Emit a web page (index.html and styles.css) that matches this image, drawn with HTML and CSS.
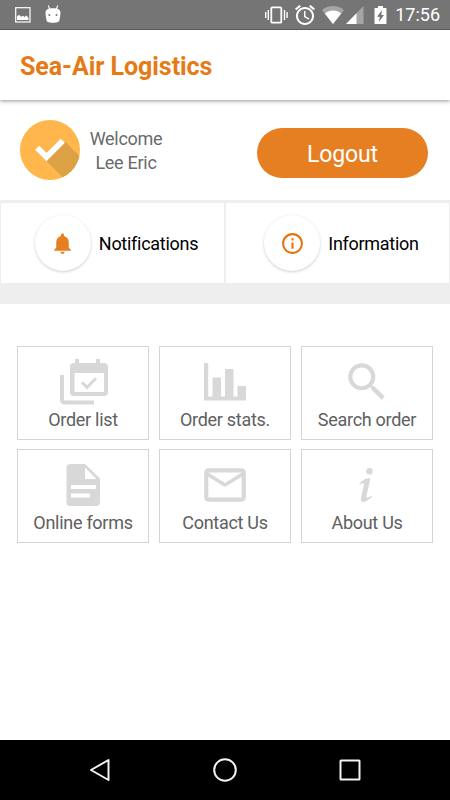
FILE: index.html
```
<!DOCTYPE html>
<html lang="en">

<head>
  <meta charset="UTF-8">
  <meta name="viewport" content="width=device-width, initial-scale=1.0">
  <title>Sea-Air Logistics</title>
  <link rel="stylesheet" href="styles.css">
</head>

<body>
  <div class="status-bar">
    <div class="status-left">
      <svg width="16" height="16" viewBox="0 0 16 16">
        <rect x="0.7" y="0.7" width="14.3" height="14.3" fill="none" stroke="#fff" stroke-width="1.2" />
        <path d="M2 13V9.500l2-1.800 2 2 2-1 1.500 1.300 2-1.500L13.500 11v2z" fill="#fff" />
      </svg>
      <svg width="16" height="18" viewBox="0 0 16 18">
        <path d="M3.300.5l1.500 4M12.700.5l-1.500 4" stroke="#fff" stroke-width="1.1" />
        <path d="M.5 8c0-3.500 2.500-4.700 7.500-4.700s7.500 1.200 7.500 4.700c0 2-.7 4.500-.9 6.500-.2 2.200-1.600 3.200-6.600 3.200s-6.400-1-6.600-3.200C1.200 12.500.5 10 .5 8z" fill="#fff" />
        <circle cx="4.300" cy="10" r="1" fill="#757575" />
        <circle cx="11.500" cy="10" r="1" fill="#757575" />
      </svg>
    </div>
    <div class="status-right">
      <svg class="icon-vibrate" width="24" height="18" viewBox="0 0 24 18" fill="none" stroke="#fff">
        <rect x="7.300" y="1.300" width="10" height="15.400" rx="1" stroke-width="1.800" />
        <path d="M4.300 4v10M20.500 4v10M1.700 6v6M23.100 6v6" stroke-width="1.400" />
      </svg>
      <svg class="icon-alarm" width="20" height="20" viewBox="2 2 20 20" fill="#fff">
        <path d="M22 5.720l-4.600-3.860-1.290 1.530 4.600 3.860L22 5.720zM7.880 3.390L6.600 1.860 2 5.710l1.290 1.530 4.590-3.850zM12.500 8H11v6l4.750 2.850.75-1.230-4-2.370V8zM12 4c-4.970 0-9 4.030-9 9s4.020 9 9 9c4.970 0 9-4.030 9-9s-4.030-9-9-9zm0 16c-3.870 0-7-3.130-7-7s3.130-7 7-7 7 3.130 7 7-3.130 7-7 7z" />
      </svg>
      <svg class="icon-wifi" width="22" height="18" viewBox="0 0 22 18" fill="#fff">
        <path d="M11 18L0 4.200C6-1.300 16-1.300 22 4.200z" fill-opacity=".35" />
        <path d="M11 18L2.800 7.600C7.500 3.400 14.500 3.400 19.200 7.600z" />
      </svg>
      <svg class="icon-signal" width="18" height="18" viewBox="0 0 18 18" fill="#fff">
        <path d="M0 18L17.500 0V18z" fill-opacity=".35" />
        <path d="M0 18L10.500 7.200V18z" />
      </svg>
      <svg class="icon-battery" width="13" height="18" viewBox="0 0 13 18">
        <path d="M4 0h5v2h2.700q.8 0 .8.8V17.200q0 .8-.8.800H1.300q-.8 0-.8-.8V2.800q0-.8.800-.8H4z" fill="#fff" />
        <path d="M8 4.300L3 10.700h2.800L5 15.700l5-6.700H7.300z" fill="#757575" />
      </svg>
      <span class="time">17:56</span>
    </div>
  </div>

  <header class="header">
    <h1>Sea-Air Logistics</h1>
  </header>

  <section class="user">
    <svg class="avatar" width="60" height="60" viewBox="0 0 60 60">
      <defs>
        <clipPath id="avatar-clip"><circle cx="30" cy="30" r="30" /></clipPath>
      </defs>
      <circle cx="30" cy="30" r="30" fill="#ffb74d" />
      <path d="M26.500 41L47 61.500H60V36.500L44.800 21.300z" fill="#dca045" clip-path="url(#avatar-clip)" />
      <path d="M17.200 27.800L26.500 37.100L42.800 20.800" fill="none" stroke="#fff" stroke-width="5.800" />
    </svg>
    <div class="welcome">
      <div>Welcome</div>
      <div>Lee Eric</div>
    </div>
    <button class="logout">Logout</button>
  </section>

  <section class="shortcuts">
    <div class="shortcut">
      <span class="round">
        <svg width="25" height="25" viewBox="0 0 24 24" fill="#e67e22">
          <path d="M12 22c1.100 0 2-.9 2-2h-4c0 1.100.89 2 2 2zm6-6v-5c0-3.070-1.640-5.640-4.500-6.320V4c0-.83-.67-1.500-1.500-1.500s-1.500.67-1.500 1.500v.68C7.630 5.360 6 7.920 6 11v5l-2 2v1h16v-1l-2-2z" />
        </svg>
      </span>
      <span>Notifications</span>
    </div>
    <div class="shortcut">
      <span class="round">
        <svg width="25" height="25" viewBox="0 0 24 24" fill="#e67310">
          <path d="M11 17h2v-6h-2v6zm1-15C6.480 2 2 6.480 2 12s4.480 10 10 10 10-4.480 10-10S17.520 2 12 2zm0 18c-4.410 0-8-3.590-8-8s3.590-8 8-8 8 3.590 8 8-3.590 8-8 8zM11 9h2V7h-2v2z" />
        </svg>
      </span>
      <span>Information</span>
    </div>
  </section>

  <main class="menu">
    <div class="menu-item">
      <svg viewBox="0 0 50 50">
        <path d="M4 18v24.500q0 3 3 3h29" fill="none" stroke="#d8d8d8" stroke-width="4" />
        <path d="M17 2h4v4h17V2h4v4h4q4 0 4 4v25q0 4-4 4H16q-4 0-4-4V10q0-4 4-4h1zM16.500 16v19H46V16z" fill-rule="evenodd" />
        <path d="M24 25.500l5 4.800 9-9" fill="none" stroke="#d8d8d8" stroke-width="3" />
      </svg>
      <div>Order list</div>
    </div>
    <div class="menu-item">
      <svg viewBox="0 0 50 50">
        <path d="M4 6h4.200v33.500H12.500V20.500h8.500v19H25V12h8.500v27.500H37.500V29H46v14.500H4z" />
      </svg>
      <div>Order stats.</div>
    </div>
    <div class="menu-item">
      <svg viewBox="0 0 24 24">
        <path d="M15.500 14h-.79l-.28-.27C15.410 12.590 16 11.110 16 9.500 16 5.910 13.090 3 9.500 3S3 5.910 3 9.500 5.910 16 9.500 16c1.610 0 3.090-.59 4.230-1.570l.27.28v.79l5 4.990L20.490 19l-4.990-5zm-6 0C7.010 14 5 11.990 5 9.500S7.010 5 9.500 5 14 7.010 14 9.500 11.990 14 9.500 14z" />
      </svg>
      <div>Search order</div>
    </div>
    <div class="menu-item">
      <svg viewBox="0 0 50 50">
        <path d="M12.500 4H27L42 18.500V42q0 4-4 4H12.500q-4 0-4-4V8q0-4 4-4zM27 7.500V19H38.500zM13 25v4h25v-4zM13 33.500v4h18.800v-4z" fill-rule="evenodd" />
      </svg>
      <div>Online forms</div>
    </div>
    <div class="menu-item">
      <svg viewBox="0 0 24 24">
        <path d="M20 4H4c-1.100 0-2 .9-2 2v12c0 1.100.9 2 2 2h16c1.100 0 2-.9 2-2V6c0-1.100-.9-2-2-2zm0 14H4V8l8 5 8-5v10zm-8-7L4 6h16l-8 5z" />
      </svg>
      <div>Contact Us</div>
    </div>
    <div class="menu-item">
      <svg viewBox="0 0 50 50">
        <circle cx="27.500" cy="11.300" r="3.200" />
        <path d="M17.500 23.500Q22 18 28.500 18.200L24.400 36Q23.700 39.500 29.800 35.400V37.200Q24.500 42 21 42Q18.300 41.800 19.100 37.500L22 24.500Q22.800 21.300 17.500 24.500z" />
      </svg>
      <div>About Us</div>
    </div>
  </main>

  <nav class="nav-bar">
    <svg width="24" height="26" viewBox="0 0 24 26"><path d="M3 13L20.500 3V23z" /></svg>
    <svg width="24" height="26" viewBox="0 0 24 26"><circle cx="12" cy="13" r="10.800" /></svg>
    <svg width="24" height="26" viewBox="0 0 24 26"><rect x="2.500" y="3.500" width="19" height="19" rx="0.500" /></svg>
  </nav>
</body>

</html>
```
FILE: styles.css
```
* {
  padding: 0;
  margin: 0;
  box-sizing: border-box;
}

body {
  height: 800px;
  display: flex;
  flex-direction: column;
  overflow: hidden;
  background: #fff;
  font-family: Roboto, sans-serif;
  font-size: 18px;
  letter-spacing: -0.28px;
}

svg {
  display: block;
  flex-shrink: 0;
}

.status-bar {
  height: 30px;
  padding: 0 10px 0 15px;
  display: flex;
  justify-content: space-between;
  align-items: center;
  background: #757575;
  border-bottom: 1px solid #5c595b;
}

.status-left {
  display: flex;
  align-items: flex-end;
  column-gap: 14px;
  padding-bottom: 1px;
}

.status-right {
  display: flex;
  align-items: center;
}

.icon-vibrate {
  margin-right: 7px;
}

.icon-alarm {
  margin-right: 7px;
}

.icon-wifi {
  margin-right: 2px;
}

.icon-signal {
  margin-right: 10px;
}

.icon-battery {
  margin-right: 8px;
}

.time {
  color: #fff;
  font-size: 18px;
  line-height: 30px;
  letter-spacing: 0;
}

.header {
  position: relative;
  height: 70px;
  padding-left: 20px;
  background: #fff;
  box-shadow: 0 1px 4px rgba(0, 0, 0, 0.42);
  clip-path: inset(0 0 -8px 0);
}

.header h1 {
  color: #e67a15;
  font-size: 25px;
  font-weight: 700;
  line-height: 74px;
  letter-spacing: -0.05px;
}

.user {
  height: 100px;
  padding: 0 22px 0 20px;
  display: flex;
  align-items: center;
}

.welcome {
  width: 92px;
  padding-top: 2px;
  color: #6a6a6a;
  text-align: center;
  line-height: 24px;
}

.logout {
  width: 171px;
  height: 50px;
  margin-left: auto;
  margin-top: 5px;
  border: none;
  border-radius: 25px;
  background: #e67e22;
  color: #fff;
  font-family: inherit;
  font-size: 23px;
  line-height: 52px;
  letter-spacing: -0.15px;
  padding-top: 1px;
}

.shortcuts {
  height: 104px;
  padding: 3px 1px 21px;
  display: grid;
  grid-template-columns: 1fr 1fr;
  column-gap: 2px;
  background: #eee;
}

.shortcut {
  display: flex;
  justify-content: center;
  align-items: center;
  column-gap: 8px;
  padding-left: 8px;
  background: #fff;
  color: #000;
}

.round {
  width: 56px;
  height: 56px;
  display: flex;
  justify-content: center;
  align-items: center;
  border-radius: 50%;
  background: #fff;
  box-shadow: 0 1px 3px rgba(0, 0, 0, 0.2);
}

.menu {
  flex: 1;
  padding: 42px 17px 0;
  display: grid;
  grid-template-columns: repeat(3, 132px);
  grid-auto-rows: 94px;
  gap: 9px 10px;
}

.menu-item {
  display: flex;
  flex-direction: column;
  align-items: center;
  padding-top: 10px;
  border: 1px solid #d4d4d4;
  color: #606060;
  line-height: 26px;
}

.menu-item svg {
  width: 50px;
  height: 50px;
  fill: #d8d8d8;
}

.nav-bar {
  height: 60px;
  padding: 0 88px;
  display: flex;
  justify-content: space-between;
  align-items: center;
  background: #000;
}

.nav-bar svg {
  fill: none;
  stroke: #f2f2f2;
  stroke-width: 2;
  stroke-linejoin: round;
}
```
